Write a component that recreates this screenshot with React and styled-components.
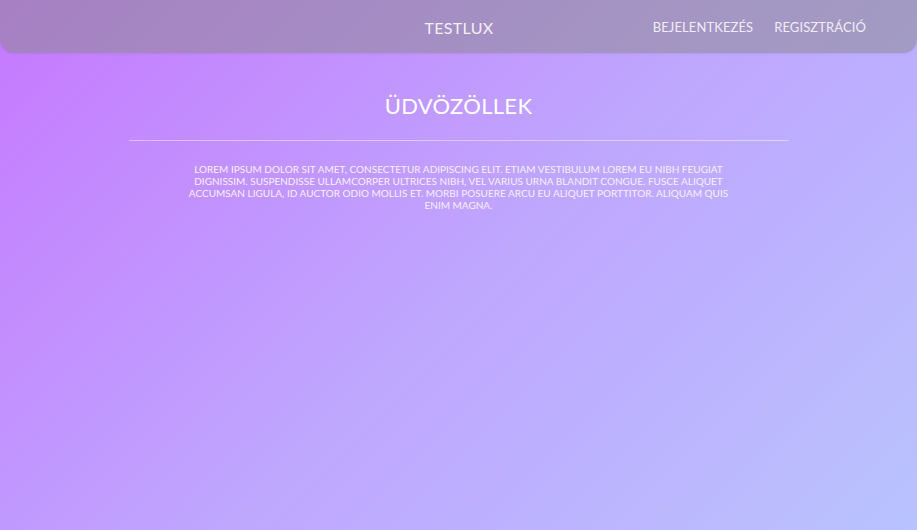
import styled, { createGlobalStyle } from 'styled-components';

const GlobalStyle = createGlobalStyle`
  html, body {
    margin: 0;
    padding: 0;
    height: 100%;
  }
  body {
    font-family: "Lato", "Noto Sans", sans-serif;
    background: linear-gradient(135deg, #c678fe 0%, #bfa5fe 50%, #b9c3fe 100%);
    background-attachment: fixed;
    min-height: 100vh;
  }
`;

export default function App() {
  return (
    <>
      <GlobalStyle />
      <Page>
        <Header>
          <Spacer />
          <Brand>TESTLUX</Brand>
          <Nav>
            <NavLink href="#">BEJELENTKEZÉS</NavLink>
            <NavLink href="#">REGISZTRÁCIÓ</NavLink>
          </Nav>
        </Header>
        <Main>
          <Title>ÜDVÖZÖLLEK</Title>
          <Divider />
          <Intro>
            Lorem ipsum dolor sit amet, consectetur adipiscing elit. Etiam vestibulum lorem eu nibh feugiat
            dignissim. Suspendisse ullamcorper ultrices nibh, vel varius urna blandit congue. Fusce aliquet
            accumsan ligula, id auctor odio mollis et. Morbi posuere arcu eu aliquet porttitor. Aliquam quis
            enim magna.
          </Intro>
        </Main>
      </Page>
    </>
  );
}

const Page = styled.div`
  min-height: 100vh;
  display: flex;
  flex-direction: column;
`;

const Header = styled.header`
  height: 53px;
  display: grid;
  grid-template-columns: 1fr auto 1fr;
  align-items: center;
  padding: 0 51px 0 20px;
  background: rgba(136, 136, 136, 0.5);
  border-radius: 0 0 14px 14px;
  box-shadow: 0 1px 2px rgba(90, 60, 130, 0.1);
`;

const Spacer = styled.div``;

const Brand = styled.div`
  color: #f4eef8;
  font-size: 16px;
  letter-spacing: 0.3px;
  padding-top: 2px;
  margin-left: 32px;
`;

const Nav = styled.nav`
  display: flex;
  justify-content: flex-end;
  gap: 21px;
`;

const NavLink = styled.a`
  color: #f2ecf6;
  font-size: 13px;
  letter-spacing: 0.1px;
  text-decoration: none;
`;

const Main = styled.main`
  display: flex;
  flex-direction: column;
  align-items: center;
  padding-top: 39px;
`;

const Title = styled.h1`
  margin: 0;
  color: #ffffff;
  font-size: 22px;
  font-weight: 400;
  letter-spacing: 0.3px;
`;

const Divider = styled.hr`
  width: 660px;
  margin: 21px 0 0;
  border: none;
  border-top: 1px solid rgba(255, 255, 255, 0.45);
`;

const Intro = styled.p`
  width: 548px;
  margin: 22px 0 0;
  color: #f6f0fc;
  font-size: 10px;
  line-height: 12px;
  text-align: center;
  text-transform: uppercase;
`;
